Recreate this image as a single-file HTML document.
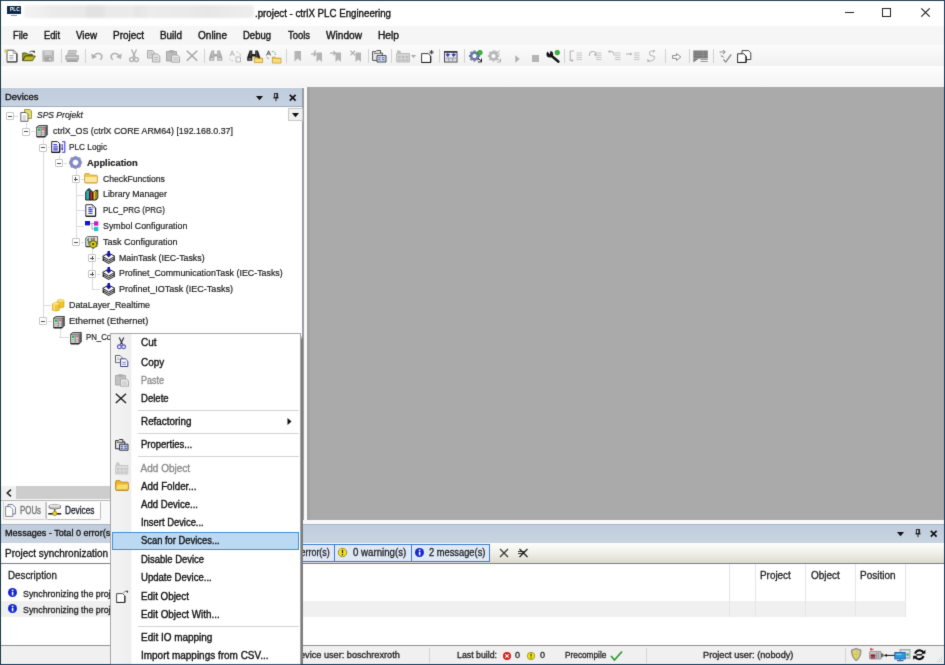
<!DOCTYPE html>
<html><head><meta charset="utf-8">
<style>
*{box-sizing:border-box;margin:0;padding:0}
html,body{width:945px;height:665px;overflow:hidden;background:#fff}
body{font-family:"Liberation Sans",sans-serif;font-size:9px;color:#1e1e1e;position:relative}
.a{position:absolute;white-space:nowrap}
.t{position:absolute;white-space:nowrap;transform-origin:0 50%}
svg{overflow:visible}
</style></head><body>
<svg width="0" height="0" style="position:absolute"><filter id="sb" x="0" y="0" width="100%" height="100%" color-interpolation-filters="sRGB"><feConvolveMatrix order="3" kernelMatrix="0.0113 0.0838 0.0113 0.0838 0.6193 0.0838 0.0113 0.0838 0.0113" edgeMode="duplicate" preserveAlpha="true"/></filter></svg>
<div id="wrap" style="position:absolute;left:-8px;top:-8px;width:961px;height:681px;background:#1e4060;filter:url(#sb)"><div style="position:absolute;left:8px;top:8px;width:945px;height:665px">
<div class="a" style="left:0px;top:0px;width:945px;height:665px;background:#fff;"></div>
<div class="a" style="left:1px;top:1px;width:943px;height:25px;background:#fff;"></div>
<div class="a" style="left:24px;top:4.5px;width:230px;height:13.5px;background:linear-gradient(90deg,#f3f3f3 0%,#efefef 8%,#ebebeb 12%,#e9e9e9 26%,#e2e2e2 28%,#e3e3e3 34%,#eaeaea 36%,#ebebeb 47%,#e6e6e6 49%,#e8e8e8 52%,#ececec 55%,#eaeaea 70%,#e7e7e7 80%,#ebebeb 90%,#eeeeee 100%);border-radius:3px;filter:blur(0.8px)"></div>
<div class="a" style="left:1px;top:26px;width:943px;height:19px;background:#f6f6f6;"></div>
<div class="a" style="left:1px;top:45px;width:943px;height:21px;background:linear-gradient(#fbfbfb,#f1f1f1);"></div>
<div class="a" style="left:1px;top:66px;width:943px;height:21px;background:linear-gradient(#fdfdfd,#f4f4f4);"></div>
<div class="a" style="left:307px;top:87px;width:637px;height:433px;background:#aaaaaa;"></div>
<div class="a" style="left:307px;top:87px;width:3px;height:433px;background:#a1a1a1;"></div>
<div class="a" style="left:1px;top:87px;width:306px;height:437px;background:#f9f9f9;"></div>
<div class="a" style="left:1px;top:520px;width:943px;height:4px;background:#f9f9f9;"></div>
<div class="a" style="left:1px;top:87.5px;width:302px;height:19px;background:linear-gradient(#bfccdc,#c7d3e1);"></div>
<div class="a" style="left:1px;top:106px;width:302px;height:380px;background:#fff;"></div>
<div class="a" style="left:1px;top:106px;width:302px;height:1px;background:#9eacc0;"></div>
<div class="a" style="left:302.2px;top:88px;width:1.5px;height:432px;background:#9a9da2;"></div>
<div class="a" style="left:1px;top:524px;width:943px;height:19px;background:linear-gradient(#bfccdc,#c9d4e1);"></div>
<div class="a" style="left:1px;top:524px;width:943px;height:1px;background:#aab6c6;"></div>
<div class="a" style="left:1px;top:543px;width:943px;height:21px;background:linear-gradient(#fdfdfb 0%,#f1f1ea 45%,#d9d9cc 100%);"></div>
<div class="a" style="left:1px;top:564px;width:943px;height:82px;background:#fff;"></div>
<div class="a" style="left:1px;top:646px;width:943px;height:18px;background:#f0f0f0;"></div>
<div class="t" style="left:255px;top:6.55px;font-size:10px;line-height:14px;height:14px;color:#111;transform:scaleX(0.9710);-webkit-text-stroke:0.35px;">.project - ctrlX PLC Engineering</div>
<div class="t" style="left:13.2px;top:28.55px;font-size:10px;line-height:14px;height:14px;color:#111;transform:scaleX(0.9309);-webkit-text-stroke:0.35px;">File</div>
<div class="t" style="left:44.2px;top:28.55px;font-size:10px;line-height:14px;height:14px;color:#111;transform:scaleX(0.9285);-webkit-text-stroke:0.35px;">Edit</div>
<div class="t" style="left:76.2px;top:28.55px;font-size:10px;line-height:14px;height:14px;color:#111;transform:scaleX(0.9770);-webkit-text-stroke:0.35px;">View</div>
<div class="t" style="left:113.2px;top:28.55px;font-size:10px;line-height:14px;height:14px;color:#111;transform:scaleX(0.9960);-webkit-text-stroke:0.35px;">Project</div>
<div class="t" style="left:160.2px;top:28.55px;font-size:10px;line-height:14px;height:14px;color:#111;transform:scaleX(0.9893);-webkit-text-stroke:0.35px;">Build</div>
<div class="t" style="left:198.2px;top:28.55px;font-size:10px;line-height:14px;height:14px;color:#111;transform:scaleX(1.0032);-webkit-text-stroke:0.35px;">Online</div>
<div class="t" style="left:243.2px;top:28.55px;font-size:10px;line-height:14px;height:14px;color:#111;transform:scaleX(0.9502);-webkit-text-stroke:0.35px;">Debug</div>
<div class="t" style="left:288.2px;top:28.55px;font-size:10px;line-height:14px;height:14px;color:#111;transform:scaleX(0.9424);-webkit-text-stroke:0.35px;">Tools</div>
<div class="t" style="left:326.2px;top:28.55px;font-size:10px;line-height:14px;height:14px;color:#111;transform:scaleX(1.0122);-webkit-text-stroke:0.35px;">Window</div>
<div class="t" style="left:378.2px;top:28.55px;font-size:10px;line-height:14px;height:14px;color:#111;transform:scaleX(1.0210);-webkit-text-stroke:0.35px;">Help</div>
<div class="a" style="left:26px;top:123px;width:1px;height:5px;background:#dadada;"></div>
<div class="a" style="left:43px;top:139px;width:1px;height:5px;background:#dadada;"></div>
<div class="a" style="left:43px;top:152px;width:1px;height:166px;background:#dadada;"></div>
<div class="a" style="left:59px;top:155px;width:1px;height:5px;background:#dadada;"></div>
<div class="a" style="left:76px;top:170px;width:1px;height:68px;background:#dadada;"></div>
<div class="a" style="left:92px;top:249px;width:1px;height:40px;background:#dadada;"></div>
<div class="a" style="left:60px;top:327px;width:1px;height:10px;background:#dadada;"></div>
<div class="a" style="left:31px;top:131px;width:4px;height:1px;background:#dadada;"></div>
<div class="a" style="left:48px;top:147px;width:2px;height:1px;background:#dadada;"></div>
<div class="a" style="left:64px;top:163px;width:3px;height:1px;background:#dadada;"></div>
<div class="a" style="left:81px;top:179px;width:3px;height:1px;background:#dadada;"></div>
<div class="a" style="left:76px;top:195px;width:8px;height:1px;background:#dadada;"></div>
<div class="a" style="left:76px;top:210px;width:9px;height:1px;background:#dadada;"></div>
<div class="a" style="left:76px;top:226px;width:8px;height:1px;background:#dadada;"></div>
<div class="a" style="left:81px;top:242px;width:3px;height:1px;background:#dadada;"></div>
<div class="a" style="left:97px;top:258px;width:3px;height:1px;background:#dadada;"></div>
<div class="a" style="left:97px;top:274px;width:3px;height:1px;background:#dadada;"></div>
<div class="a" style="left:92px;top:289px;width:8px;height:1px;background:#dadada;"></div>
<div class="a" style="left:43px;top:305px;width:8px;height:1px;background:#dadada;"></div>
<div class="a" style="left:48px;top:321px;width:4px;height:1px;background:#dadada;"></div>
<div class="a" style="left:59px;top:337px;width:10px;height:1px;background:#dadada;"></div>
<div class="a" style="left:14px;top:116px;width:4px;height:1px;background:#dadada;"></div>
<div class="t" style="left:37.1px;top:109.23px;font-size:9.2px;line-height:13.2px;height:13.2px;color:#222;font-style:italic;transform:scaleX(0.9254);-webkit-text-stroke:0.2px;">SPS Projekt</div>
<svg class="a" style="left:19.5px;top:109.0px" width="12" height="13" viewBox="0 0 12 13"><path d="M4.5 0.5 H10 L11.5 2 V9.5 H4.5 Z" fill="#e4dc62" stroke="#8c8a30" stroke-width="0.8"/><path d="M0.8 3.5 H6 L8 5.5 V12.3 H0.8 Z" fill="#fff" stroke="#555" stroke-width="0.9"/><path d="M2.5 7 H6 M2.5 9 H6 M2.5 11 H6" stroke="#999" stroke-width="0.7"/></svg>
<div class="a" style="left:5.5px;top:112.0px;width:8px;height:8px;background:#fff;border:1px solid #c6c6c6;border-radius:1px"></div>
<div class="a" style="left:7.5px;top:115.5px;width:4px;height:1px;background:#505050;"></div>
<div class="t" style="left:52.8px;top:125.23px;font-size:9.2px;line-height:13.2px;height:13.2px;color:#222;transform:scaleX(0.9629);-webkit-text-stroke:0.2px;">ctrlX_OS (ctrlX CORE ARM64) [192.168.0.37]</div>
<svg class="a" style="left:36px;top:125.0px" width="12" height="12.5" viewBox="0 0 12 12.5"><path d="M0.7 2 L3 0.5 H11.3 V10 L9 12 H0.7 Z" fill="#d9d9d9" stroke="#3a3a3a" stroke-width="0.9"/><path d="M9 12 V2.3 L11.3 0.5 M0.7 2.2 H9" stroke="#3a3a3a" stroke-width="0.7" fill="none"/><path d="M9.4 2.4 L11 1.2 V9.8 L9.4 11.4 Z" fill="#555"/><path d="M1 11.6 H9" stroke="#222" stroke-width="1.2"/><path d="M5.2 2.6 V11.5" stroke="#666" stroke-width="0.8"/><rect x="2" y="3.5" width="2.4" height="2.4" fill="#22b84a"/><rect x="6.3" y="3.3" width="2" height="2" fill="#e0507a"/><path d="M2 7.5 H4.4 M2 9.3 H4.4 M6.2 7.5 H8.4 M6.2 9.3 H8.4" stroke="#9a9a9a" stroke-width="0.7"/></svg>
<div class="a" style="left:22.0px;top:127.5px;width:8px;height:8px;background:#fff;border:1px solid #c6c6c6;border-radius:1px"></div>
<div class="a" style="left:24.0px;top:131.0px;width:4px;height:1px;background:#505050;"></div>
<div class="t" style="left:69.4px;top:141.23px;font-size:9.2px;line-height:13.2px;height:13.2px;color:#222;transform:scaleX(0.8976);-webkit-text-stroke:0.2px;">PLC Logic</div>
<svg class="a" style="left:51px;top:140.5px" width="15" height="12" viewBox="0 0 15 12"><path d="M0.7 0.6 H6.5 L8.6 2.7 V11.3 H0.7 Z" fill="#fff" stroke="#222" stroke-width="1"/><path d="M0.7 11.4 H8.6 M8.7 3 V11.4" stroke="#111" stroke-width="1.3"/><path d="M2.3 3.5 H6 M2.3 5.3 H6.8 M2.3 7.1 H6.8 M2.3 8.9 H6.8" stroke="#3a3ae0" stroke-width="1.1"/><path d="M11 0.8 H13.8 V11.2 H11 M11.2 3 V9" stroke="#3a3ae0" stroke-width="1.1" fill="none"/><path d="M10.2 7.5 L11.3 9.5 L12.4 7.5 Z" fill="#2a2ab0"/></svg>
<div class="a" style="left:38.5px;top:143.5px;width:8px;height:8px;background:#fff;border:1px solid #c6c6c6;border-radius:1px"></div>
<div class="a" style="left:40.5px;top:147.0px;width:4px;height:1px;background:#505050;"></div>
<div class="t" style="left:87.2px;top:157.23px;font-size:9.2px;line-height:13.2px;height:13.2px;color:#222;font-weight:bold;transform:scaleX(1.0142);-webkit-text-stroke:0.2px;">Application</div>
<svg class="a" style="left:68.5px;top:156.0px" width="13" height="13" viewBox="0 0 13 13"><g transform="translate(6.5 6.5)"><circle r="4.6" fill="none" stroke="#8087c4" stroke-width="3"/><g stroke="#8f95c9" stroke-width="2.2"><line x1="0" y1="-4.8" x2="0" y2="-6.6" transform="rotate(0)"/><line x1="0" y1="-4.8" x2="0" y2="-6.6" transform="rotate(45)"/><line x1="0" y1="-4.8" x2="0" y2="-6.6" transform="rotate(90)"/><line x1="0" y1="-4.8" x2="0" y2="-6.6" transform="rotate(135)"/><line x1="0" y1="-4.8" x2="0" y2="-6.6" transform="rotate(180)"/><line x1="0" y1="-4.8" x2="0" y2="-6.6" transform="rotate(225)"/><line x1="0" y1="-4.8" x2="0" y2="-6.6" transform="rotate(270)"/><line x1="0" y1="-4.8" x2="0" y2="-6.6" transform="rotate(315)"/></g><circle r="2.9" fill="#fff"/><circle r="3.2" fill="none" stroke="#6d74b4" stroke-width="0.6"/></g></svg>
<div class="a" style="left:55.0px;top:159.0px;width:8px;height:8px;background:#fff;border:1px solid #c6c6c6;border-radius:1px"></div>
<div class="a" style="left:57.0px;top:162.5px;width:4px;height:1px;background:#505050;"></div>
<div class="t" style="left:102.6px;top:173.23px;font-size:9.2px;line-height:13.2px;height:13.2px;color:#222;transform:scaleX(0.9399);-webkit-text-stroke:0.2px;">CheckFunctions</div>
<svg class="a" style="left:84.3px;top:173.0px" width="14" height="10.5" viewBox="0 0 14 10.5"><path d="M0.6 2 Q0.6 0.6 2 0.6 H5 L6.5 2.2 H12.4 Q13.4 2.2 13.4 3.4 V9 Q13.4 10 12.4 10 H1.6 Q0.6 10 0.6 9 Z" fill="#f3c64e" stroke="#c8962a" stroke-width="0.8"/><path d="M1.2 4 H12.8 V9 Q12.8 9.5 12.2 9.5 H1.8 Q1.2 9.5 1.2 9 Z" fill="#fbe7a3"/><path d="M1 9.7 H13" stroke="#d2a033" stroke-width="0.8"/></svg>
<div class="a" style="left:71.5px;top:175.0px;width:8px;height:8px;background:#fff;border:1px solid #c6c6c6;border-radius:1px"></div>
<div class="a" style="left:73.5px;top:178.5px;width:4px;height:1px;background:#505050;"></div>
<div class="a" style="left:75.0px;top:177.0px;width:1px;height:4px;background:#505050;"></div>
<div class="t" style="left:102.6px;top:188.23px;font-size:9.2px;line-height:13.2px;height:13.2px;color:#222;transform:scaleX(0.9554);-webkit-text-stroke:0.2px;">Library Manager</div>
<svg class="a" style="left:84.6px;top:187.5px" width="13.5" height="12.5" viewBox="0 0 13.5 12.5"><path d="M0.7 4 L3 1.2 L5 3.5 V12 H0.7 Z" fill="#1fb3b3" stroke="#111" stroke-width="0.9"/><path d="M3 1.2 L4.5 0.5 L6 2.5 L5 3.5 Z" fill="#0d8a8a" stroke="#111" stroke-width="0.7"/><path d="M4.8 4.5 L6.3 2.8 L8.2 4.5 V12 H4.8 Z" fill="#e01e1e" stroke="#111" stroke-width="0.9"/><path d="M8 4.5 L10 2.5 L12.8 2.2 V10 L11 12 H8 Z" fill="#d9d326" stroke="#111" stroke-width="0.9"/><path d="M11 4 V12 M11 4 L12.8 2.2" stroke="#111" stroke-width="0.7" fill="none"/></svg>
<div class="t" style="left:102.6px;top:204.23px;font-size:9.2px;line-height:13.2px;height:13.2px;color:#222;transform:scaleX(0.8663);-webkit-text-stroke:0.2px;">PLC_PRG (PRG)</div>
<svg class="a" style="left:85.3px;top:203.5px" width="11.5" height="13" viewBox="0 0 11.5 13"><path d="M0.8 0.7 H7.5 L10.5 3.6 V12.2 H0.8 Z" fill="#fff" stroke="#333" stroke-width="1"/><path d="M0.8 12.3 H10.6 M10.6 4 V12.3" stroke="#222" stroke-width="1.2"/><path d="M7.3 0.8 V3.8 H10.3" stroke="#555" stroke-width="0.7" fill="none"/><path d="M3.4 3.6 H6.2 M3.4 5.5 H7.6 M3.4 7.4 H7.6 M3.4 9.3 H7.6" stroke="#4848e6" stroke-width="1.3"/></svg>
<div class="t" style="left:102.6px;top:220.23px;font-size:9.2px;line-height:13.2px;height:13.2px;color:#222;transform:scaleX(0.9595);-webkit-text-stroke:0.2px;">Symbol Configuration</div>
<svg class="a" style="left:84.6px;top:220.5px" width="13.5" height="10.5" viewBox="0 0 13.5 10.5"><rect x="0" y="0" width="5" height="4.4" fill="#1414c8"/><rect x="9" y="0.3" width="4.3" height="4.4" fill="#d018d0"/><rect x="9" y="5.8" width="4.3" height="4.4" fill="#16c8c8"/><path d="M5 2.2 H7 V8 H9 M7 2.5 H9" stroke="#888" stroke-width="0.7" fill="none"/></svg>
<div class="t" style="left:102.6px;top:236.23px;font-size:9.2px;line-height:13.2px;height:13.2px;color:#222;transform:scaleX(0.9803);-webkit-text-stroke:0.2px;">Task Configuration</div>
<svg class="a" style="left:84.8px;top:235.5px" width="13.5" height="12.5" viewBox="0 0 13.5 12.5"><path d="M0.7 2.2 L2.6 0.6 H12.6 V8.5 L10.8 10.5 H0.7 Z" fill="#dcdcdc" stroke="#444" stroke-width="0.8"/><path d="M1.2 10.6 H6" stroke="#222" stroke-width="1.2"/><path d="M3.4 2.2 V8.5 M6.3 2 V6 M9.2 1.8 V5" stroke="#666" stroke-width="1"/><rect x="2" y="3" width="1.8" height="1.8" fill="#22b84a"/><rect x="7.6" y="1.8" width="1.6" height="1.6" fill="#e0507a"/><g transform="translate(8.2 8.2)"><circle r="3.5" fill="#dccf24" stroke="#5a5410" stroke-width="0.9"/><g stroke="#7a7014" stroke-width="1.7"><line x1="0" y1="-3.4" x2="0" y2="-4.8" transform="rotate(0)"/><line x1="0" y1="-3.4" x2="0" y2="-4.8" transform="rotate(60)"/><line x1="0" y1="-3.4" x2="0" y2="-4.8" transform="rotate(120)"/><line x1="0" y1="-3.4" x2="0" y2="-4.8" transform="rotate(180)"/><line x1="0" y1="-3.4" x2="0" y2="-4.8" transform="rotate(240)"/><line x1="0" y1="-3.4" x2="0" y2="-4.8" transform="rotate(300)"/></g><circle r="1.1" fill="#3a360a"/></g></svg>
<div class="a" style="left:71.5px;top:238.0px;width:8px;height:8px;background:#fff;border:1px solid #c6c6c6;border-radius:1px"></div>
<div class="a" style="left:73.5px;top:241.5px;width:4px;height:1px;background:#505050;"></div>
<div class="t" style="left:119px;top:252.23px;font-size:9.2px;line-height:13.2px;height:13.2px;color:#222;transform:scaleX(0.9580);-webkit-text-stroke:0.2px;">MainTask (IEC-Tasks)</div>
<svg class="a" style="left:101.6px;top:251.0px" width="13.5" height="13" viewBox="0 0 13.5 13"><path d="M0.6 9 L6.7 5.6 L13 9 L6.7 12.5 Z" fill="#dcdcdc" stroke="#222" stroke-width="1"/><path d="M0.6 7.2 L6.7 3.8 L13 7.2 L6.7 10.7 Z" fill="#ececec" stroke="#222" stroke-width="1"/><path d="M0.6 5.4 L6.7 2 L13 5.4 L6.7 8.9 Z" fill="#fff" stroke="#222" stroke-width="1"/><path d="M5.5 0 H8 V3.3 H9.9 L6.75 6.6 L3.6 3.3 H5.5 Z" fill="#1616b0"/></svg>
<div class="a" style="left:88.0px;top:254.0px;width:8px;height:8px;background:#fff;border:1px solid #c6c6c6;border-radius:1px"></div>
<div class="a" style="left:90.0px;top:257.5px;width:4px;height:1px;background:#505050;"></div>
<div class="a" style="left:91.5px;top:256.0px;width:1px;height:4px;background:#505050;"></div>
<div class="t" style="left:119px;top:267.23px;font-size:9.2px;line-height:13.2px;height:13.2px;color:#222;transform:scaleX(0.9627);-webkit-text-stroke:0.2px;">Profinet_CommunicationTask (IEC-Tasks)</div>
<svg class="a" style="left:101.6px;top:266.5px" width="13.5" height="13" viewBox="0 0 13.5 13"><path d="M0.6 9 L6.7 5.6 L13 9 L6.7 12.5 Z" fill="#dcdcdc" stroke="#222" stroke-width="1"/><path d="M0.6 7.2 L6.7 3.8 L13 7.2 L6.7 10.7 Z" fill="#ececec" stroke="#222" stroke-width="1"/><path d="M0.6 5.4 L6.7 2 L13 5.4 L6.7 8.9 Z" fill="#fff" stroke="#222" stroke-width="1"/><path d="M5.5 0 H8 V3.3 H9.9 L6.75 6.6 L3.6 3.3 H5.5 Z" fill="#1616b0"/></svg>
<div class="a" style="left:88.0px;top:270.0px;width:8px;height:8px;background:#fff;border:1px solid #c6c6c6;border-radius:1px"></div>
<div class="a" style="left:90.0px;top:273.5px;width:4px;height:1px;background:#505050;"></div>
<div class="a" style="left:91.5px;top:272.0px;width:1px;height:4px;background:#505050;"></div>
<div class="t" style="left:119px;top:283.23px;font-size:9.2px;line-height:13.2px;height:13.2px;color:#222;transform:scaleX(0.9832);-webkit-text-stroke:0.2px;">Profinet_IOTask (IEC-Tasks)</div>
<svg class="a" style="left:101.6px;top:282.5px" width="13.5" height="13" viewBox="0 0 13.5 13"><path d="M0.6 9 L6.7 5.6 L13 9 L6.7 12.5 Z" fill="#dcdcdc" stroke="#222" stroke-width="1"/><path d="M0.6 7.2 L6.7 3.8 L13 7.2 L6.7 10.7 Z" fill="#ececec" stroke="#222" stroke-width="1"/><path d="M0.6 5.4 L6.7 2 L13 5.4 L6.7 8.9 Z" fill="#fff" stroke="#222" stroke-width="1"/><path d="M5.5 0 H8 V3.3 H9.9 L6.75 6.6 L3.6 3.3 H5.5 Z" fill="#1616b0"/></svg>
<div class="t" style="left:68.9px;top:299.23px;font-size:9.2px;line-height:13.2px;height:13.2px;color:#222;transform:scaleX(0.9670);-webkit-text-stroke:0.2px;">DataLayer_Realtime</div>
<svg class="a" style="left:51.5px;top:298.5px" width="12.5" height="12.5" viewBox="0 0 12.5 12.5"><path d="M5.3 1.3 Q8.6 -0.6 12 1.3 V8 Q8.6 9.8 5.3 8 Z" fill="#f0c428" stroke="#c79a12" stroke-width="0.6"/><ellipse cx="8.65" cy="1.5" rx="3.3" ry="1.2" fill="#f8e27e"/><path d="M0.4 4.4 Q3.7 2.5 7.2 4.4 V11.2 Q3.7 13 0.4 11.2 Z" fill="#f2c62c" stroke="#c79a12" stroke-width="0.6"/><ellipse cx="3.8" cy="4.6" rx="3.3" ry="1.2" fill="#fae88e"/><path d="M2.2 6 V11.5" stroke="#f9e9a0" stroke-width="1.2"/></svg>
<div class="t" style="left:68.9px;top:315.23px;font-size:9.2px;line-height:13.2px;height:13.2px;color:#222;transform:scaleX(1.0148);-webkit-text-stroke:0.2px;">Ethernet (Ethernet)</div>
<svg class="a" style="left:53px;top:315.5px" width="12" height="12.5" viewBox="0 0 12 12.5"><path d="M0.7 2 L3 0.5 H11.3 V10 L9 12 H0.7 Z" fill="#d9d9d9" stroke="#3a3a3a" stroke-width="0.9"/><path d="M9 12 V2.3 L11.3 0.5 M0.7 2.2 H9" stroke="#3a3a3a" stroke-width="0.7" fill="none"/><path d="M9.4 2.4 L11 1.2 V9.8 L9.4 11.4 Z" fill="#555"/><path d="M1 11.6 H9" stroke="#222" stroke-width="1.2"/><path d="M5.2 2.6 V11.5" stroke="#666" stroke-width="0.8"/><rect x="2" y="3.5" width="2.4" height="2.4" fill="#22b84a"/><rect x="6.3" y="3.3" width="2" height="2" fill="#e0507a"/><path d="M2 7.5 H4.4 M2 9.3 H4.4 M6.2 7.5 H8.4 M6.2 9.3 H8.4" stroke="#9a9a9a" stroke-width="0.7"/></svg>
<div class="a" style="left:38.5px;top:317.0px;width:8px;height:8px;background:#fff;border:1px solid #c6c6c6;border-radius:1px"></div>
<div class="a" style="left:40.5px;top:320.5px;width:4px;height:1px;background:#505050;"></div>
<div class="t" style="left:85.8px;top:331.23px;font-size:9.2px;line-height:13.2px;height:13.2px;color:#222;transform:scaleX(0.8515);-webkit-text-stroke:0.2px;clip-path:inset(0 29px 0 0);">PN_Controller</div>
<svg class="a" style="left:69.6px;top:331.5px" width="12" height="12.5" viewBox="0 0 12 12.5"><path d="M0.7 2 L3 0.5 H11.3 V10 L9 12 H0.7 Z" fill="#d9d9d9" stroke="#3a3a3a" stroke-width="0.9"/><path d="M9 12 V2.3 L11.3 0.5 M0.7 2.2 H9" stroke="#3a3a3a" stroke-width="0.7" fill="none"/><path d="M9.4 2.4 L11 1.2 V9.8 L9.4 11.4 Z" fill="#555"/><path d="M1 11.6 H9" stroke="#222" stroke-width="1.2"/><path d="M5.2 2.6 V11.5" stroke="#666" stroke-width="0.8"/><rect x="2" y="3.5" width="2.4" height="2.4" fill="#22b84a"/><rect x="6.3" y="3.3" width="2" height="2" fill="#e0507a"/><path d="M2 7.5 H4.4 M2 9.3 H4.4 M6.2 7.5 H8.4 M6.2 9.3 H8.4" stroke="#9a9a9a" stroke-width="0.7"/></svg>
<div class="a" style="left:61px;top:49px;width:1px;height:14px;background:#d2d2d2;"></div>
<div class="a" style="left:85px;top:49px;width:1px;height:14px;background:#d2d2d2;"></div>
<div class="a" style="left:204px;top:49px;width:1px;height:14px;background:#d2d2d2;"></div>
<div class="a" style="left:286px;top:49px;width:1px;height:14px;background:#d2d2d2;"></div>
<div class="a" style="left:368px;top:49px;width:1px;height:14px;background:#d2d2d2;"></div>
<div class="a" style="left:391px;top:49px;width:1px;height:14px;background:#d2d2d2;"></div>
<div class="a" style="left:439px;top:49px;width:1px;height:14px;background:#d2d2d2;"></div>
<div class="a" style="left:464px;top:49px;width:1px;height:14px;background:#d2d2d2;"></div>
<div class="a" style="left:564px;top:49px;width:1px;height:14px;background:#d2d2d2;"></div>
<div class="a" style="left:665px;top:49px;width:1px;height:14px;background:#d2d2d2;"></div>
<div class="a" style="left:689px;top:49px;width:1px;height:14px;background:#d2d2d2;"></div>
<div class="a" style="left:713px;top:49px;width:1px;height:14px;background:#d2d2d2;"></div>
<svg class="a" style="left:3.5px;top:49px" width="14" height="13.5" viewBox="0 0 14 13.5"><path d="M3 1.2 H9.5 L12.8 4.3 V12.8 H3 Z" fill="#fff" stroke="#5a5a5a" stroke-width="1"/><path d="M3 13 H12.9 M12.9 4.6 V13" stroke="#3c3c3c" stroke-width="1.1"/><path d="M9.3 1.4 V4.5 H12.6" fill="none" stroke="#777" stroke-width="0.7"/><path d="M5.3 6.5 H9.6 M5.3 8.3 H9.6 M5.3 10 H9.6" stroke="#9a9a9a" stroke-width="0.8"/><path d="M1.8 0 V4 M0 2 H3.8 M0.5 0.6 L3.2 3.4 M3.2 0.6 L0.5 3.4" stroke="#d8c83a" stroke-width="0.8"/></svg>
<svg class="a" style="left:22px;top:50px" width="14" height="11.5" viewBox="0 0 14 11.5"><path d="M0.7 3 H4.5 L5.8 4.3 H10.3 V6 H3.2 L0.7 10.6 Z" fill="#a4a41e" stroke="#3c3c0c" stroke-width="0.8"/><path d="M3.4 6 H13.3 L10.5 10.7 H0.8 Z" fill="#b9b92a" stroke="#3c3c0c" stroke-width="0.8"/><path d="M7.5 2.2 Q9.5 0.2 11.5 1.8" fill="none" stroke="#444" stroke-width="0.9"/><path d="M10.3 0.8 H12.8 V3.3 Z" fill="#222"/></svg>
<svg class="a" style="left:42px;top:49.5px" width="12.5" height="12" viewBox="0 0 12.5 12"><rect x="0.4" y="0.4" width="11.6" height="11.2" fill="#b8b8b8"/><rect x="2.4" y="0.4" width="7.4" height="4.6" fill="#cfcfcf"/><rect x="2.8" y="7" width="6.6" height="4.6" fill="#a6a6a6"/><rect x="7.3" y="8" width="1.4" height="2.6" fill="#dcdcdc"/></svg>
<svg class="a" style="left:65px;top:49.5px" width="14.5" height="12.5" viewBox="0 0 14.5 12.5"><path d="M3.5 0.5 H11.5 L10.5 5 H2.5 Z" fill="#d6d6d6" stroke="#a8a8a8" stroke-width="0.8"/><path d="M1 5 H13 Q14 5 14 6 V10 H0.3 V6 Q0.3 5 1 5 Z" fill="#b4b4b4"/><path d="M1.5 10 H12.8 V12 H1.5 Z" fill="#a2a2a2"/><path d="M4 2 H10.4 M3.7 3.5 H10" stroke="#a8a8a8" stroke-width="0.7"/><path d="M2 7.5 H12.3" stroke="#d8d8d8" stroke-width="1"/></svg>
<svg class="a" style="left:91px;top:52px" width="12" height="8.5" viewBox="0 0 12 8.5"><path d="M2.2 4.5 Q6.5 -0.5 10.3 2.8 Q12 5.2 9.3 7.8" fill="none" stroke="#b0b0b0" stroke-width="1.5"/><path d="M0.2 1.6 L1 7 L6 5 Z" fill="#b0b0b0"/></svg>
<svg class="a" style="left:110px;top:52px" width="12" height="8.5" viewBox="0 0 12 8.5"><g transform="translate(12 0) scale(-1 1)"><path d="M2.2 4.5 Q6.5 -0.5 10.3 2.8 Q12 5.2 9.3 7.8" fill="none" stroke="#b0b0b0" stroke-width="1.5"/><path d="M0.2 1.6 L1 7 L6 5 Z" fill="#b0b0b0"/></g></svg>
<svg class="a" style="left:128.5px;top:49px" width="10" height="13.5" viewBox="0 0 10 13.5"><path d="M2.5 0.5 L6.3 8.6 M7.5 0.5 L3.7 8.6" stroke="#adadad" stroke-width="1.3"/><circle cx="2.6" cy="10.6" r="2" fill="none" stroke="#adadad" stroke-width="1.3"/><circle cx="7.4" cy="10.6" r="2" fill="none" stroke="#adadad" stroke-width="1.3"/></svg>
<svg class="a" style="left:147px;top:49.5px" width="13.5" height="12.5" viewBox="0 0 13.5 12.5"><path d="M0.5 0.5 H5.5 L7.5 2.5 V8 H0.5 Z" fill="#d8d8d8" stroke="#a4a4a4" stroke-width="0.9"/><path d="M5.5 4 H10.5 L12.8 6.2 V12 H5.5 Z" fill="#e0e0e0" stroke="#a4a4a4" stroke-width="0.9"/><path d="M7 7.5 H11 M7 9.5 H11" stroke="#b4b4b4" stroke-width="0.8"/><path d="M2 3 H5 M2 5 H5" stroke="#b4b4b4" stroke-width="0.8"/></svg>
<svg class="a" style="left:166px;top:49.5px" width="14" height="12.5" viewBox="0 0 14 12.5"><path d="M0.5 1.5 H10.5 V11 H0.5 Z" fill="#bdbdbd" stroke="#a2a2a2" stroke-width="0.9"/><rect x="3.2" y="0.2" width="4.6" height="2.6" fill="#a8a8a8"/><path d="M5.5 5 H11.5 L13.5 7 V12.2 H5.5 Z" fill="#e6e6e6" stroke="#a2a2a2" stroke-width="0.9"/><path d="M7 8 H12 M7 10 H12" stroke="#b4b4b4" stroke-width="0.8"/></svg>
<svg class="a" style="left:186px;top:50px" width="12" height="11.5" viewBox="0 0 12 11.5"><path d="M0.8 0.8 L11.2 10.8 M11.2 0.8 L0.8 10.8" stroke="#a6a6a6" stroke-width="1.5"/></svg>
<svg class="a" style="left:209px;top:50px" width="13.5" height="11.5" viewBox="0 0 13.5 11.5"><path d="M2.6 0.4 H5.3 V4 H8.2 V0.4 H10.9 L13.3 7.5 V10.8 H8.2 V6.5 H5.3 V10.8 H0.2 V7.5 Z" fill="#a9a9a9"/><path d="M1.6 8 H4.2 V10 H1.6 Z M9.4 8 H12 V10 H9.4 Z" fill="#d0d0d0"/><path d="M3.7 1.5 V6.5 M9.8 1.5 V6.5" stroke="#d0d0d0" stroke-width="0.8"/></svg>
<svg class="a" style="left:228px;top:49.5px" width="13.5" height="12.5" viewBox="0 0 13.5 12.5"><path d="M2 6 L4.2 0.8 L6.4 6 M2.9 4.2 H5.5" fill="none" stroke="#b8b8b8" stroke-width="1"/><path d="M8.5 2 Q12.5 2 12.3 6" fill="none" stroke="#bcbcbc" stroke-width="1" stroke-dasharray="1.4 1"/><path d="M5 10.8 Q1.5 10.8 1.7 7.5" fill="none" stroke="#bcbcbc" stroke-width="1" stroke-dasharray="1.4 1"/><path d="M8 7 H12.5 V12 H8 Z" fill="none" stroke="#b8b8b8" stroke-width="1"/></svg>
<svg class="a" style="left:247px;top:49.5px" width="13.5" height="11.5" viewBox="0 0 13.5 11.5"><path d="M2.6 0.4 H5.3 V4 H8.2 V0.4 H10.9 L13.3 7.5 V10.8 H8.2 V6.5 H5.3 V10.8 H0.2 V7.5 Z" fill="#202020"/><path d="M1.6 8 H4.2 V10 H1.6 Z M9.4 8 H12 V10 H9.4 Z" fill="#6a6a6a"/><path d="M3.7 1.5 V6.5 M9.8 1.5 V6.5" stroke="#6a6a6a" stroke-width="0.8"/></svg>
<svg class="a" style="left:253.5px;top:56px" width="9" height="7" viewBox="0 0 9 7"><path d="M0.4 1.2 H3.2 L4 2.2 H8.6 V6.6 H0.4 Z" fill="#f0c040" stroke="#b88a18" stroke-width="0.7"/><path d="M0.8 3 H8.2 V6.2 H0.8 Z" fill="#f8dc78"/></svg>
<svg class="a" style="left:266px;top:49.5px" width="10" height="9" viewBox="0 0 10 9"><path d="M0.6 5.5 L2.6 0.8 L4.6 5.5 M1.4 3.9 H3.8" fill="none" stroke="#444" stroke-width="0.9"/><path d="M5.8 1.5 Q9.5 1 9.3 5" fill="none" stroke="#4a9a4a" stroke-width="0.9" stroke-dasharray="1.4 0.9"/><path d="M3 8.5 Q0.7 8.5 0.9 6.8" fill="none" stroke="#4a9a4a" stroke-width="0.9" stroke-dasharray="1.4 0.9"/></svg>
<svg class="a" style="left:271.5px;top:55.5px" width="9.5" height="7.5" viewBox="0 0 9.5 7.5"><path d="M0.4 1.2 H3.2 L4 2.2 H9 V7 H0.4 Z" fill="#f0c040" stroke="#b88a18" stroke-width="0.7"/><path d="M0.8 3 H8.6 V6.6 H0.8 Z" fill="#f8dc78"/></svg>
<svg class="a" style="left:290.5px;top:49.5px" width="12" height="12.5" viewBox="0 0 12 12.5"><path d="M3.5 1 H10 V11.5 L6.75 8.6 L3.5 11.5 Z" fill="#b4b4b4"/></svg>
<svg class="a" style="left:311px;top:49.5px" width="12" height="12.5" viewBox="0 0 12 12.5"><path d="M5.5 2.5 H11 V12 L8.25 9.5 L5.5 12 Z" fill="#b4b4b4"/><path d="M0 4.2 H4.5 M2.6 2 L4.8 4.2 L2.6 6.4" fill="none" stroke="#b0b0b0" stroke-width="1.2"/><path d="M3 1 L5 0 L5 3Z" fill="#b8b8b8"/></svg>
<svg class="a" style="left:330px;top:49.5px" width="12" height="12.5" viewBox="0 0 12 12.5"><path d="M5.5 2.5 H11 V12 L8.25 9.5 L5.5 12 Z" fill="#b4b4b4"/><path d="M0 3.2 H5.5 M3.4 1 L5.6 3.2 L3.4 5.4" fill="none" stroke="#b0b0b0" stroke-width="1.2"/></svg>
<svg class="a" style="left:350px;top:49.5px" width="12" height="12.5" viewBox="0 0 12 12.5"><path d="M5.5 2.5 H11 V12 L8.25 9.5 L5.5 12 Z" fill="#b4b4b4"/><path d="M0.5 0.8 L5 5.2 M5 0.8 L0.5 5.2" fill="none" stroke="#b0b0b0" stroke-width="1.2"/></svg>
<svg class="a" style="left:372px;top:49.5px" width="14.5" height="12.5" viewBox="0 0 14.5 12.5"><path d="M0.6 1.6 H3.8 L4.8 0.5 H8.5 V3 H10.4 V10.4 H0.6 Z" fill="#e8e8e8" stroke="#3c3c3c" stroke-width="0.9"/><path d="M2 3.4 H8.8" stroke="#555" stroke-width="0.8"/><path d="M5 5.6 H14 V12 H5 Z" fill="#dfe6f4" stroke="#333" stroke-width="0.9"/><path d="M6.3 7.8 H8.6 M9.8 7.8 H12.6 M6.3 9.8 H8.6 M9.8 9.8 H12.6" stroke="#4a5aa8" stroke-width="1"/></svg>
<svg class="a" style="left:396px;top:49.5px" width="14.5" height="12.5" viewBox="0 0 14.5 12.5"><path d="M0.6 3.5 H13.5 V12 H0.6 Z" fill="#d4d4d4" stroke="#b4b4b4" stroke-width="0.8"/><path d="M2.2 6 H4.6 V8 H2.2 Z M6 6 H8.4 V8 H6 Z M9.8 6 H12.2 V8 H9.8 Z M2.2 9.3 H4.6 V11 H2.2 Z M6 9.3 H8.4 V11 H6 Z M9.8 9.3 H12.2 V11 H9.8 Z" fill="#bcbcbc"/><path d="M1 0.5 H4 L5.5 3.4 H1 Z" fill="#bdbdbd"/></svg>
<svg class="a" style="left:410.8px;top:55px" width="5" height="3" viewBox="0 0 5 3"><path d="M0 0 H5 L2.5 3 Z" fill="#a8a8a8"/></svg>
<svg class="a" style="left:421px;top:49.5px" width="13" height="13" viewBox="0 0 13 13"><path d="M0.6 3.6 H7.3 L9.6 6 V12.4 H0.6 Z" fill="#fff" stroke="#3a3a3a" stroke-width="1"/><path d="M0.6 12.5 H9.7 M9.7 6.2 V12.5" stroke="#1e1e1e" stroke-width="1.2"/><path d="M10.5 0 V4.4 M8.3 2.2 H12.7 M9 0.7 L12 3.7 M12 0.7 L9 3.7" stroke="#333" stroke-width="0.8"/></svg>
<svg class="a" style="left:444px;top:50.5px" width="13.5" height="11.5" viewBox="0 0 13.5 11.5"><rect x="0.5" y="0.5" width="12.5" height="10.5" fill="#f2f2f8" stroke="#4a4a4a" stroke-width="1"/><path d="M0.5 1 H13" stroke="#333" stroke-width="1.6"/><path d="M3.8 1.5 V4 M2 3.4 L3.8 5.6 L5.6 3.4 Z M9.7 1.5 V4 M7.9 3.4 L9.7 5.6 L11.5 3.4 Z" fill="#2a3ac8" stroke="#2a3ac8" stroke-width="0.9"/><path d="M1.5 7 H12 M4.8 7 V10.5 M8.7 7 V10.5" stroke="#7a7a8a" stroke-width="0.8"/><path d="M1.5 8.8 H12" stroke="#b0b0b8" stroke-width="0.7"/></svg>
<svg class="a" style="left:469px;top:49.5px" width="14" height="13" viewBox="0 0 14 13"><g transform="translate(5.5 6)"><circle r="3.4" fill="none" stroke="#6e7aa4" stroke-width="2.6"/><g stroke="#6e7aa4" stroke-width="2"><line x1="0" y1="-4.2" x2="0" y2="-5.6" transform="rotate(0)"/><line x1="0" y1="-4.2" x2="0" y2="-5.6" transform="rotate(45)"/><line x1="0" y1="-4.2" x2="0" y2="-5.6" transform="rotate(90)"/><line x1="0" y1="-4.2" x2="0" y2="-5.6" transform="rotate(135)"/><line x1="0" y1="-4.2" x2="0" y2="-5.6" transform="rotate(180)"/><line x1="0" y1="-4.2" x2="0" y2="-5.6" transform="rotate(225)"/><line x1="0" y1="-4.2" x2="0" y2="-5.6" transform="rotate(270)"/><line x1="0" y1="-4.2" x2="0" y2="-5.6" transform="rotate(315)"/></g><circle r="1.7" fill="#fff"/></g><path d="M9 8 L12.5 11.5 M9 12 L12.5 12 L12.5 8.5" fill="none" stroke="#222" stroke-width="1"/><circle cx="11" cy="2.6" r="2.3" fill="#2fc02f" stroke="#1a6a1a" stroke-width="0.5"/></svg>
<svg class="a" style="left:488px;top:49.5px" width="14" height="13" viewBox="0 0 14 13"><g transform="translate(5.5 6)"><circle r="3.4" fill="none" stroke="#b8b8b8" stroke-width="2.6"/><g stroke="#b8b8b8" stroke-width="2"><line x1="0" y1="-4.2" x2="0" y2="-5.6" transform="rotate(0)"/><line x1="0" y1="-4.2" x2="0" y2="-5.6" transform="rotate(45)"/><line x1="0" y1="-4.2" x2="0" y2="-5.6" transform="rotate(90)"/><line x1="0" y1="-4.2" x2="0" y2="-5.6" transform="rotate(135)"/><line x1="0" y1="-4.2" x2="0" y2="-5.6" transform="rotate(180)"/><line x1="0" y1="-4.2" x2="0" y2="-5.6" transform="rotate(225)"/><line x1="0" y1="-4.2" x2="0" y2="-5.6" transform="rotate(270)"/><line x1="0" y1="-4.2" x2="0" y2="-5.6" transform="rotate(315)"/></g><circle r="1.7" fill="#fff"/></g><path d="M9 8 L12.5 11.5 M9 12 L12.5 12 L12.5 8.5" fill="none" stroke="#b0b0b0" stroke-width="1"/></svg>
<svg class="a" style="left:493.5px;top:50px" width="7" height="5" viewBox="0 0 7 5"><path d="M0.5 0.5 L6 4.5 M6 0.5 L0.5 4.5" stroke="#b4b4b4" stroke-width="0.9"/></svg>
<svg class="a" style="left:515px;top:54.5px" width="5" height="8" viewBox="0 0 5 8"><path d="M0.3 0.3 L4.7 4 L0.3 7.7 Z" fill="#b0b0b0"/></svg>
<div class="a" style="left:532px;top:55px;width:7px;height:7px;background:#b4b4b4;"></div>
<svg class="a" style="left:546px;top:49.5px" width="15" height="13" viewBox="0 0 15 13"><path d="M4.5 5 L12.3 11.6" stroke="#141414" stroke-width="2.6" stroke-linecap="round"/><circle cx="3.8" cy="4.2" r="3.3" fill="#141414"/><path d="M-0.5 -0.5 L4 4.3 L4.6 -0.8 Z" fill="#f6f6f6"/><circle cx="11.3" cy="2.6" r="2.3" fill="#2fc02f" stroke="#1a6a1a" stroke-width="0.5"/></svg>
<svg class="a" style="left:569px;top:50px" width="14" height="12" viewBox="0 0 14 12"><path d="M5 1 H1.2 V10.5 H3" fill="none" stroke="#b4b4b4" stroke-width="1.1"/><path d="M2.5 8.8 L4.6 10.5 L2.5 12.2 Z" fill="#b4b4b4"/><path d="M7.5 3 H13.0 M7.5 5.2 H13.0 M7.5 7.4 H13.0 M7.5 9.6 H13.0" stroke="#c0c0c0" stroke-width="0.9"/></svg>
<svg class="a" style="left:588px;top:50px" width="14" height="12" viewBox="0 0 14 12"><path d="M1.5 6 Q1 1.5 5 1.5 Q8 1.5 7.5 4.5" fill="none" stroke="#b4b4b4" stroke-width="1.1"/><path d="M5.8 4 L7.5 6.4 L9 3.8 Z" fill="#b4b4b4"/><path d="M8 3 H13.5 M8 5.2 H13.5 M8 7.4 H13.5 M8 9.6 H13.5" stroke="#c0c0c0" stroke-width="0.9"/></svg>
<svg class="a" style="left:607px;top:50px" width="14" height="12" viewBox="0 0 14 12"><path d="M7 5.5 Q7.5 1.5 3.5 1.5 H2" fill="none" stroke="#b4b4b4" stroke-width="1.1"/><path d="M3.2 -0.2 L0.8 1.5 L3.2 3.2 Z" fill="#b4b4b4"/><path d="M8 3 H13.5 M8 5.2 H13.5 M8 7.4 H13.5 M8 9.6 H13.5" stroke="#c0c0c0" stroke-width="0.9"/></svg>
<svg class="a" style="left:626px;top:50px" width="14" height="12" viewBox="0 0 14 12"><path d="M0 4 H5" fill="none" stroke="#b4b4b4" stroke-width="1.1"/><path d="M4 2.2 L6.4 4 L4 5.8 Z" fill="#b4b4b4"/><path d="M8 3 H13.5 M8 5.2 H13.5 M8 7.4 H13.5 M8 9.6 H13.5" stroke="#c0c0c0" stroke-width="0.9"/></svg>
<svg class="a" style="left:646px;top:49.5px" width="11" height="13" viewBox="0 0 11 13"><path d="M8 1 Q3 0.5 3.5 3.5 Q4 6 7 6 Q9.5 6.5 8 9 Q6 12 2 11" fill="none" stroke="#b8b8b8" stroke-width="1.1"/><path d="M6.5 0 L9.5 0.6 L7.5 3 Z" fill="#b8b8b8"/><path d="M1 9 L4 10.2 L1.6 12.4 Z" fill="#b8b8b8"/></svg>
<svg class="a" style="left:672px;top:52.5px" width="9.5" height="8" viewBox="0 0 9.5 8"><path d="M0.6 2.6 H4.6 V0.6 L8.8 4 L4.6 7.4 V5.4 H0.6 Z" fill="#fff" stroke="#7a7a7a" stroke-width="0.9"/></svg>
<svg class="a" style="left:693px;top:49.5px" width="15.5" height="13" viewBox="0 0 15.5 13"><rect x="0.3" y="0.5" width="14.5" height="8" fill="#7c7c7c"/><path d="M0.3 3 H14.8 M0.3 5.5 H14.8" stroke="#9c9c9c" stroke-width="0.7" stroke-dasharray="1.5 1"/><path d="M0.3 8.5 L6 8.5 L0.3 12.5 Z" fill="#7c7c7c"/><path d="M7.5 9.5 H14.8 M7.5 11.5 H14.8" stroke="#9a9a9a" stroke-width="1"/><path d="M10 0.5 V8.5" stroke="#a0a0a0" stroke-width="0.6"/></svg>
<svg class="a" style="left:719px;top:49.5px" width="13" height="13" viewBox="0 0 13 13"><path d="M0.5 2 H6 M4 0 L6.3 2 L4 4" fill="none" stroke="#8a8a8a" stroke-width="1"/><path d="M2 4.5 L5 8 M2 6.5 H4" fill="none" stroke="#9a9a9a" stroke-width="0.9"/><path d="M4.5 9.5 L6.8 12 L12.2 4.5" fill="none" stroke="#8c8c8c" stroke-width="1.3"/></svg>
<svg class="a" style="left:737px;top:49.5px" width="14.5" height="13" viewBox="0 0 14.5 13"><path d="M5 0.6 H11.5 L13.8 2.8 V9.5 H5 Z" fill="#fff" stroke="#444" stroke-width="1"/><path d="M0.6 3.8 H6.8 L9 6 V12.4 H0.6 Z" fill="#fff" stroke="#333" stroke-width="1"/><path d="M0.6 12.5 H9.1 M9.1 6.2 V12.5" stroke="#1e1e1e" stroke-width="1.2"/></svg>
<div class="t" style="left:5.3px;top:91.23px;font-size:9.2px;line-height:13.2px;height:13.2px;color:#111;transform:scaleX(1.0238);-webkit-text-stroke:0.3px;">Devices</div>
<svg class="a" style="left:255.8px;top:95.7px" width="7" height="4.4" viewBox="0 0 7 4.4"><path d="M0 0 H7 L3.5 4.2 Z" fill="#111"/></svg>
<svg class="a" style="left:273px;top:93.0px" width="6" height="9" viewBox="0 0 6 9"><path d="M1.4 0.5 H4.6 V4.6 H1.4 Z" fill="none" stroke="#111" stroke-width="0.9"/><path d="M4 0.5 V4.6" stroke="#111" stroke-width="1.1"/><path d="M0.3 4.9 H5.7 M3 4.9 V8.2" stroke="#111" stroke-width="0.9"/></svg>
<svg class="a" style="left:289.3px;top:93.8px" width="7.4" height="7.4" viewBox="0 0 7.4 7.4"><path d="M0.8 0.8 L6.6 6.6 M6.6 0.8 L0.8 6.6" stroke="#111" stroke-width="1.7"/></svg>
<div class="a" style="left:288px;top:108px;width:15px;height:13px;background:#f0f0f0;border:1px solid #c8c8c8"></div>
<svg class="a" style="left:292px;top:112.7px" width="7" height="4.4" viewBox="0 0 7 4.4"><path d="M0 0 H7 L3.5 4.2 Z" fill="#111"/></svg>
<div class="a" style="left:1px;top:486px;width:302px;height:13px;background:#f0f0f0;"></div>
<div class="a" style="left:16px;top:486px;width:287px;height:13px;background:#cdcdcd;"></div>
<svg class="a" style="left:5.5px;top:488.5px" width="6" height="8" viewBox="0 0 6 8"><path d="M5 0.6 L1.2 4 L5 7.4" fill="none" stroke="#222" stroke-width="1.5"/></svg>
<div class="a" style="left:1px;top:499.5px;width:302px;height:1px;background:#b4b4b4;"></div>
<div class="a" style="left:2.5px;top:502px;width:43.5px;height:17.5px;background:#f6f6f6;border:1px solid #d0d0d0;border-top:none;border-radius:0 0 2px 2px"></div>
<div class="a" style="left:46px;top:501.5px;width:54.5px;height:18px;background:#fff;border:1px solid #bdbdbd;border-top:none;border-radius:0 0 2px 2px"></div>
<svg class="a" style="left:4.5px;top:503.5px" width="11" height="13" viewBox="0 0 11 13"><path d="M3 0.6 H7.5 L10.4 3.5 V10 H3 Z" fill="#fff" stroke="#5a6a9a" stroke-width="0.9"/><path d="M0.6 2.6 H5.2 L7.8 5.2 V12.4 H0.6 Z" fill="#fff" stroke="#7a7a7a" stroke-width="0.9"/></svg>
<div class="t" style="left:19.8px;top:503.56px;font-size:10px;line-height:14px;height:14px;color:#6e6e6e;transform:scaleX(0.7874);-webkit-text-stroke:0.3px;">POUs</div>
<svg class="a" style="left:48px;top:504px" width="13.5" height="12" viewBox="0 0 13.5 12"><path d="M1 1.5 Q6.7 -0.8 12.5 1.5 V4 Q6.7 6.5 1 4 Z" fill="#c4c4c4" stroke="#6a6a6a" stroke-width="0.8"/><ellipse cx="6.75" cy="1.7" rx="5.4" ry="1.3" fill="#e2e2e2"/><path d="M6.75 5 V8" stroke="#333" stroke-width="1"/><path d="M0.3 9.8 H13.2" stroke="#222" stroke-width="1.6"/><circle cx="6.75" cy="9.4" r="2.2" fill="#f0d020" stroke="#7a6a08" stroke-width="0.6"/></svg>
<div class="t" style="left:64.8px;top:503.56px;font-size:10px;line-height:14px;height:14px;color:#1a1a2a;transform:scaleX(0.8294);-webkit-text-stroke:0.3px;">Devices</div>
<div class="t" style="left:5.3px;top:527.23px;font-size:9.2px;line-height:13.2px;height:13.2px;color:#111;transform:scaleX(0.9875);-webkit-text-stroke:0.3px;">Messages - Total 0 error(s), 0 warning(s), 2 message(s)</div>
<svg class="a" style="left:896.8px;top:531.7px" width="7" height="4.4" viewBox="0 0 7 4.4"><path d="M0 0 H7 L3.5 4.2 Z" fill="#111"/></svg>
<svg class="a" style="left:914.5px;top:529.0px" width="6" height="9" viewBox="0 0 6 9"><path d="M1.4 0.5 H4.6 V4.6 H1.4 Z" fill="none" stroke="#111" stroke-width="0.9"/><path d="M4 0.5 V4.6" stroke="#111" stroke-width="1.1"/><path d="M0.3 4.9 H5.7 M3 4.9 V8.2" stroke="#111" stroke-width="0.9"/></svg>
<svg class="a" style="left:929.9px;top:529.8px" width="7.4" height="7.4" viewBox="0 0 7.4 7.4"><path d="M0.8 0.8 L6.6 6.6 M6.6 0.8 L0.8 6.6" stroke="#111" stroke-width="1.7"/></svg>
<div class="a" style="left:1px;top:543px;width:228px;height:20px;background:#fefefe;"></div>
<div class="t" style="left:5px;top:546.55px;font-size:10px;line-height:14px;height:14px;color:#111;transform:scaleX(0.9963);-webkit-text-stroke:0.3px;">Project synchronization</div>
<div class="a" style="left:1px;top:563px;width:943px;height:1px;background:#7d7d88;"></div>
<div class="t" style="left:8px;top:568.55px;font-size:10px;line-height:14px;height:14px;color:#222;transform:scaleX(0.9796);-webkit-text-stroke:0.3px;">Description</div>
<div class="t" style="left:760.4px;top:568.55px;font-size:10px;line-height:14px;height:14px;color:#222;transform:scaleX(0.9896);-webkit-text-stroke:0.3px;">Project</div>
<div class="t" style="left:810.6px;top:568.55px;font-size:10px;line-height:14px;height:14px;color:#222;transform:scaleX(0.9965);-webkit-text-stroke:0.3px;">Object</div>
<div class="t" style="left:860px;top:568.55px;font-size:10px;line-height:14px;height:14px;color:#222;-webkit-text-stroke:0.3px;">Position</div>
<div class="a" style="left:1px;top:601px;width:905px;height:16px;background:#f0f0f0;"></div>
<div class="a" style="left:729px;top:564px;width:1px;height:53px;background:#e6e6e6;"></div>
<div class="a" style="left:755px;top:564px;width:1px;height:53px;background:#e6e6e6;"></div>
<div class="a" style="left:805px;top:564px;width:1px;height:53px;background:#e6e6e6;"></div>
<div class="a" style="left:855px;top:564px;width:1px;height:53px;background:#e6e6e6;"></div>
<div class="a" style="left:905px;top:564px;width:1px;height:53px;background:#e6e6e6;"></div>
<div class="t" style="left:22.8px;top:588.23px;font-size:9.2px;line-height:13.2px;height:13.2px;color:#222;transform:scaleX(0.9633);-webkit-text-stroke:0.3px;">Synchronizing the project...</div>
<svg class="a" style="left:8px;top:588.1px" width="9" height="9" viewBox="0 0 9 9"><circle cx="4.5" cy="4.5" r="4.5" fill="#1428d2"/><rect x="3.8" y="1.6" width="1.6" height="1.5" fill="#fff"/><rect x="3.8" y="3.8" width="1.6" height="3.6" fill="#fff"/></svg>
<div class="t" style="left:22.8px;top:604.23px;font-size:9.2px;line-height:13.2px;height:13.2px;color:#222;transform:scaleX(0.9633);-webkit-text-stroke:0.3px;">Synchronizing the project...</div>
<svg class="a" style="left:8px;top:604.1px" width="9" height="9" viewBox="0 0 9 9"><circle cx="4.5" cy="4.5" r="4.5" fill="#1428d2"/><rect x="3.8" y="1.6" width="1.6" height="1.5" fill="#fff"/><rect x="3.8" y="3.8" width="1.6" height="3.6" fill="#fff"/></svg>
<div class="a" style="left:230px;top:544px;width:105.39999999999998px;height:18px;background:#dfe9f6;border:1px solid #3c7bd0"></div>
<div class="a" style="left:334.2px;top:544px;width:78.19999999999999px;height:18px;background:#dfe9f6;border:1px solid #3c7bd0"></div>
<div class="a" style="left:411px;top:544px;width:79.19999999999999px;height:18px;background:#dfe9f6;border:1px solid #3c7bd0"></div>
<div class="t" style="left:292.5px;top:545.55px;font-size:10px;line-height:14px;height:14px;color:#222;transform:scaleX(0.8950);-webkit-text-stroke:0.3px;">0 error(s)</div>
<div class="t" style="left:352.7px;top:545.55px;font-size:10px;line-height:14px;height:14px;color:#222;transform:scaleX(0.9687);-webkit-text-stroke:0.3px;">0 warning(s)</div>
<div class="t" style="left:428.6px;top:545.55px;font-size:10px;line-height:14px;height:14px;color:#222;transform:scaleX(0.9310);-webkit-text-stroke:0.3px;">2 message(s)</div>
<svg class="a" style="left:338px;top:548px" width="9" height="9" viewBox="0 0 9 9"><circle cx="4.5" cy="4.5" r="4.2" fill="#f3e21a" stroke="#8a8200" stroke-width="0.8"/><rect x="3.9" y="1.8" width="1.2" height="3.4" fill="#222"/><rect x="3.9" y="6" width="1.2" height="1.2" fill="#222"/></svg>
<svg class="a" style="left:414.5px;top:548px" width="9" height="9" viewBox="0 0 9 9"><circle cx="4.5" cy="4.5" r="4.5" fill="#1428d2"/><rect x="3.8" y="1.6" width="1.6" height="1.5" fill="#fff"/><rect x="3.8" y="3.8" width="1.6" height="3.6" fill="#fff"/></svg>
<svg class="a" style="left:499px;top:548px" width="10" height="10" viewBox="0 0 10 10"><path d="M1 1 L9 9 M9 1 L1 9" stroke="#333" stroke-width="1.2"/></svg>
<svg class="a" style="left:518px;top:548px" width="11" height="10" viewBox="0 0 11 10"><path d="M1.5 1 L9.5 9 M9.5 1 L1.5 9" stroke="#222" stroke-width="1.3"/><path d="M0 3.5 H7 M0 5.5 H6" stroke="#222" stroke-width="0.9"/></svg>
<div class="a" style="left:1px;top:645px;width:943px;height:1px;background:#909090;"></div>
<div class="t" style="left:300px;top:649.40px;font-size:9px;line-height:13px;height:13px;color:#222;transform:scaleX(1.0179);-webkit-text-stroke:0.3px;">evice user: boschrexroth</div>
<div class="t" style="left:456.8px;top:649.40px;font-size:9px;line-height:13px;height:13px;color:#222;transform:scaleX(0.9749);-webkit-text-stroke:0.3px;">Last build:</div>
<div class="t" style="left:564.6px;top:649.40px;font-size:9px;line-height:13px;height:13px;color:#222;transform:scaleX(0.9196);-webkit-text-stroke:0.3px;">Precompile</div>
<div class="t" style="left:703px;top:649.40px;font-size:9px;line-height:13px;height:13px;color:#222;transform:scaleX(1.0210);-webkit-text-stroke:0.3px;">Project user: (nobody)</div>
<div class="t" style="left:515px;top:649.40px;font-size:9px;line-height:13px;height:13px;color:#222;-webkit-text-stroke:0.3px;">0</div>
<div class="t" style="left:540px;top:649.40px;font-size:9px;line-height:13px;height:13px;color:#222;-webkit-text-stroke:0.3px;">0</div>
<div class="a" style="left:429px;top:648px;width:1px;height:15px;background:#d4d4d4;"></div>
<div class="a" style="left:646px;top:648px;width:1px;height:15px;background:#d4d4d4;"></div>
<div class="a" style="left:845px;top:648px;width:1px;height:15px;background:#d4d4d4;"></div>
<svg class="a" style="left:503.3px;top:651.5px" width="8" height="8" viewBox="0 0 8 8"><circle cx="4" cy="4" r="4" fill="#d81e1e"/><path d="M2.3 2.3 L5.7 5.7 M5.7 2.3 L2.3 5.7" stroke="#fff" stroke-width="1.2"/></svg>
<svg class="a" style="left:526.5px;top:651.5px" width="8" height="8" viewBox="0 0 8 8"><circle cx="4" cy="4" r="3.7" fill="#f3e21a" stroke="#8a8200" stroke-width="0.7"/><rect x="3.5" y="1.6" width="1" height="3" fill="#222"/><rect x="3.5" y="5.4" width="1" height="1" fill="#222"/></svg>
<svg class="a" style="left:610px;top:650px" width="13" height="11" viewBox="0 0 13 11"><path d="M1 6 L4.5 10 L12 1.5" stroke="#2f9e2f" stroke-width="1.8" fill="none"/></svg>
<svg class="a" style="left:850.5px;top:648.3px" width="10.5" height="13.5" viewBox="0 0 10.5 13.5"><path d="M5.25 0.4 L10 2 Q10.2 9 5.25 13 Q0.3 9 0.5 2 Z" fill="#b9b6a4" stroke="#77746a" stroke-width="0.8"/><path d="M5.25 2 L8.6 3.1 Q8.6 8.4 5.25 11.2 Q1.9 8.4 1.9 3.1 Z" fill="#e9db4e"/><path d="M5.25 2 V11.2 M1.9 6.2 H8.6" stroke="#c9bd5a" stroke-width="0.7"/><path d="M5.25 2 L8.6 3.1 V6.2 H5.25 Z" fill="#c8c6b0" opacity="0.7"/></svg>
<svg class="a" style="left:869px;top:647.5px" width="41.5" height="13.5" viewBox="0 0 41.5 13.5"><path d="M1.2 1.3 H4.5 M1 1.3 L2.6 0.3 M1 1.3 L2.6 2.3" stroke="#d01c2c" stroke-width="0.9" fill="none"/><rect x="0.6" y="3.4" width="11.6" height="7.6" rx="0.8" fill="#c3c3c3" stroke="#808080" stroke-width="0.7"/><rect x="1.6" y="6.4" width="4.6" height="2.4" fill="#a01830"/><rect x="1.6" y="9.3" width="4.6" height="1.2" fill="#8a2030"/><path d="M7.5 4.5 V10 M9.3 4.5 V10" stroke="#8c8c8c" stroke-width="0.8"/><path d="M12.2 5.2 L14.6 6 V8.6 L12.2 9.6 Z" fill="#5a5a5a"/><path d="M15.5 7.4 H26" stroke="#111" stroke-width="1"/><path d="M15.2 7.4 L17.8 5.8 V9 Z" fill="#111"/><rect x="31" y="1.6" width="10" height="8.6" fill="#c4ccd6" stroke="#8a94a2" stroke-width="0.7"/><rect x="33" y="3" width="7" height="5.6" fill="#e4e8ee"/><circle cx="38.6" cy="6.6" r="1.3" fill="#3ab04a"/><rect x="25.8" y="4.4" width="10.4" height="6.6" fill="#2c98e2" stroke="#1c5a9a" stroke-width="0.8"/><path d="M27.4 6.4 H32.5" stroke="#9ad4fa" stroke-width="1"/><path d="M28 12.6 H34.5 M31.2 11 V12.6" stroke="#3a6a9a" stroke-width="1.1"/></svg>
<svg class="a" style="left:913.2px;top:649.2px" width="12.5" height="11.5" viewBox="0 0 12.5 11.5"><path d="M2 4.6 Q3.4 1.2 6.8 1.3 Q9.6 1.6 10.6 4" fill="none" stroke="#0a0a0a" stroke-width="2"/><path d="M10.6 7 Q9.2 10.3 5.8 10.2 Q3 9.9 2 7.5" fill="none" stroke="#0a0a0a" stroke-width="2"/><path d="M8.2 4.8 H12.4 V0.8 Z" fill="#0a0a0a"/><path d="M4.4 6.8 H0.2 V10.8 Z" fill="#0a0a0a"/><path d="M3.4 5.8 H9.2" stroke="#0a0a0a" stroke-width="1.4"/></svg>
<div class="a" style="left:941px;top:657px;width:1px;height:1px;background:#c0c0c0;"></div>
<div class="a" style="left:939px;top:659px;width:1px;height:1px;background:#c0c0c0;"></div>
<div class="a" style="left:941px;top:659px;width:1px;height:1px;background:#c0c0c0;"></div>
<div class="a" style="left:937px;top:661px;width:1px;height:1px;background:#c0c0c0;"></div>
<div class="a" style="left:939px;top:661px;width:1px;height:1px;background:#c0c0c0;"></div>
<div class="a" style="left:941px;top:661px;width:1px;height:1px;background:#c0c0c0;"></div>
<div class="a" style="left:845px;top:12px;width:9px;height:1px;background:#222;"></div>
<div class="a" style="left:882px;top:8px;width:9px;height:9px;background:transparent;border:1px solid #222"></div>
<svg class="a" style="left:920.5px;top:8px" width="9" height="9" viewBox="0 0 9 9"><path d="M0.3 0.3 L8.7 8.7 M8.7 0.3 L0.3 8.7" stroke="#222" stroke-width="1.2"/></svg>
<div class="a" style="left:301px;top:335px;width:1.7px;height:330px;background:linear-gradient(rgba(120,120,120,0) 0px,#7c7c7c 5px,#7c7c7c 100%);"></div>
<div class="a" style="left:110px;top:333px;width:191px;height:340px;background:#fff;border:1px solid #a6a6a6"></div>
<div class="a" style="left:111px;top:334px;width:20px;height:338px;background:linear-gradient(90deg,#f4f4f4,#eeeeee);"></div>
<div class="a" style="left:131px;top:334px;width:1px;height:338px;background:#fafafa;"></div>
<div class="a" style="left:112px;top:532px;width:187px;height:18px;background:#bcd9f3;border:1px solid #3f8fd9"></div>
<div class="t" style="left:140.6px;top:335.56px;font-size:10px;line-height:14px;height:14px;color:#111;transform:scaleX(0.9960);-webkit-text-stroke:0.35px;">Cut</div>
<div class="t" style="left:140.6px;top:355.56px;font-size:10px;line-height:14px;height:14px;color:#111;transform:scaleX(0.9895);-webkit-text-stroke:0.35px;">Copy</div>
<div class="t" style="left:140.6px;top:373.56px;font-size:10px;line-height:14px;height:14px;color:#8c8c8c;transform:scaleX(0.9033);-webkit-text-stroke:0.35px;">Paste</div>
<div class="t" style="left:140.6px;top:391.56px;font-size:10px;line-height:14px;height:14px;color:#111;transform:scaleX(0.9548);-webkit-text-stroke:0.35px;">Delete</div>
<div class="t" style="left:140.6px;top:414.56px;font-size:10px;line-height:14px;height:14px;color:#111;transform:scaleX(0.9875);-webkit-text-stroke:0.35px;">Refactoring</div>
<div class="t" style="left:140.6px;top:437.56px;font-size:10px;line-height:14px;height:14px;color:#111;transform:scaleX(0.9497);-webkit-text-stroke:0.35px;">Properties...</div>
<div class="t" style="left:140.6px;top:461.56px;font-size:10px;line-height:14px;height:14px;color:#8c8c8c;-webkit-text-stroke:0.35px;">Add Object</div>
<div class="t" style="left:140.6px;top:479.56px;font-size:10px;line-height:14px;height:14px;color:#111;transform:scaleX(0.9788);-webkit-text-stroke:0.35px;">Add Folder...</div>
<div class="t" style="left:140.6px;top:497.56px;font-size:10px;line-height:14px;height:14px;color:#111;transform:scaleX(0.9584);-webkit-text-stroke:0.35px;">Add Device...</div>
<div class="t" style="left:140.6px;top:515.55px;font-size:10px;line-height:14px;height:14px;color:#111;transform:scaleX(0.9402);-webkit-text-stroke:0.35px;">Insert Device...</div>
<div class="t" style="left:140.6px;top:533.55px;font-size:10px;line-height:14px;height:14px;color:#111;transform:scaleX(0.9378);-webkit-text-stroke:0.35px;">Scan for Devices...</div>
<div class="t" style="left:140.6px;top:552.55px;font-size:10px;line-height:14px;height:14px;color:#111;transform:scaleX(0.9461);-webkit-text-stroke:0.35px;">Disable Device</div>
<div class="t" style="left:140.6px;top:570.55px;font-size:10px;line-height:14px;height:14px;color:#111;transform:scaleX(0.9564);-webkit-text-stroke:0.35px;">Update Device...</div>
<div class="t" style="left:140.6px;top:589.55px;font-size:10px;line-height:14px;height:14px;color:#111;transform:scaleX(0.9793);-webkit-text-stroke:0.35px;">Edit Object</div>
<div class="t" style="left:140.6px;top:607.55px;font-size:10px;line-height:14px;height:14px;color:#111;transform:scaleX(0.9835);-webkit-text-stroke:0.35px;">Edit Object With...</div>
<div class="t" style="left:140.6px;top:630.55px;font-size:10px;line-height:14px;height:14px;color:#111;transform:scaleX(0.9957);-webkit-text-stroke:0.35px;">Edit IO mapping</div>
<div class="t" style="left:140.6px;top:648.55px;font-size:10px;line-height:14px;height:14px;color:#111;transform:scaleX(0.9960);-webkit-text-stroke:0.35px;">Import mappings from CSV...</div>
<div class="a" style="left:138px;top:410px;width:161px;height:1px;background:#d4d4d4;"></div>
<div class="a" style="left:138px;top:433px;width:161px;height:1px;background:#d4d4d4;"></div>
<div class="a" style="left:138px;top:456px;width:161px;height:1px;background:#d4d4d4;"></div>
<div class="a" style="left:138px;top:626px;width:161px;height:1px;background:#d4d4d4;"></div>
<svg class="a" style="left:287px;top:417px" width="5" height="9" viewBox="0 0 5 9"><path d="M0.5 1 L4.5 4.5 L0.5 8 Z" fill="#111"/></svg>
<svg class="a" style="left:116.5px;top:337px" width="9" height="12.5" viewBox="0 0 9 12.5"><path d="M2.2 0.4 L5.6 7.6 M6.8 0.4 L3.4 7.6" stroke="#2a2a3a" stroke-width="1.1"/><circle cx="2.4" cy="9.8" r="1.9" fill="none" stroke="#4a4ab8" stroke-width="1.1"/><circle cx="6.6" cy="9.8" r="1.9" fill="none" stroke="#4a4ab8" stroke-width="1.1"/></svg>
<svg class="a" style="left:114.5px;top:355px" width="13.5" height="12" viewBox="0 0 13.5 12"><path d="M0.5 0.5 H5 L7 2.5 V7.6 H0.5 Z" fill="#fff" stroke="#555" stroke-width="0.9"/><path d="M1.8 3 H4.6 M1.8 4.8 H5.4" stroke="#888" stroke-width="0.7"/><path d="M5.6 3.8 H10.4 L12.8 6.2 V11.5 H5.6 Z" fill="#fff" stroke="#3a3a9a" stroke-width="1"/><path d="M7.2 7.2 H11 M7.2 9.2 H11" stroke="#5a5ab8" stroke-width="0.8"/></svg>
<svg class="a" style="left:114.5px;top:374px" width="14" height="12.5" viewBox="0 0 14 12.5"><path d="M0.5 1.5 H10.5 V11 H0.5 Z" fill="#c2c2c2" stroke="#a6a6a6" stroke-width="0.9"/><rect x="3.2" y="0.2" width="4.6" height="2.6" fill="#acacac"/><path d="M5.5 5 H11.5 L13.5 7 V12.2 H5.5 Z" fill="#e8e8e8" stroke="#a6a6a6" stroke-width="0.9"/><path d="M7 8 H12 M7 10 H12" stroke="#b8b8b8" stroke-width="0.8"/></svg>
<svg class="a" style="left:115px;top:393px" width="12" height="11" viewBox="0 0 12 11"><path d="M0.8 0.8 L11 10 M11 0.8 L0.8 10" stroke="#1a1a1a" stroke-width="1.3"/></svg>
<svg class="a" style="left:114.8px;top:438.6px" width="13.6" height="11.8" viewBox="0 0 13.6 11.8"><path d="M0.6 1.6 H3.4 L4.4 0.5 H7.8 V2.8 H9.8 V9.8 H0.6 Z" fill="#e4e4e4" stroke="#2e2e2e" stroke-width="1"/><path d="M1.8 3.3 H8.4" stroke="#444" stroke-width="0.9"/><path d="M4.6 5.2 H13 V11.2 H4.6 Z" fill="#d6def0" stroke="#2e2e3e" stroke-width="1"/><path d="M5.9 7.3 H8 M9.2 7.3 H11.8 M5.9 9.2 H8 M9.2 9.2 H11.8" stroke="#3a4aa0" stroke-width="1.1"/></svg>
<svg class="a" style="left:115px;top:461.5px" width="13.5" height="12.5" viewBox="0 0 13.5 12.5"><path d="M0.6 3.5 H12.8 V12 H0.6 Z" fill="#dcdcdc" stroke="#c0c0c0" stroke-width="0.8"/><path d="M2.2 6 H4.4 V8 H2.2 Z M5.8 6 H8 V8 H5.8 Z M9.4 6 H11.6 V8 H9.4 Z M2.2 9.3 H4.4 V11 H2.2 Z M5.8 9.3 H8 V11 H5.8 Z M9.4 9.3 H11.6 V11 H9.4 Z" fill="#c4c4c4"/><path d="M1 0.5 H4 L5.5 3.4 H1 Z" fill="#c8c8c8"/></svg>
<svg class="a" style="left:114.5px;top:480px" width="14" height="11" viewBox="0 0 14 11"><path d="M0.6 2 Q0.6 0.6 2 0.6 H5 L6.5 2.2 H12.4 Q13.4 2.2 13.4 3.4 V9.4 Q13.4 10.4 12.4 10.4 H1.6 Q0.6 10.4 0.6 9.4 Z" fill="#ecb630" stroke="#b98a1e" stroke-width="0.9"/><path d="M2.4 4.6 H13.2 L12.4 9.8 H1.2 Z" fill="#f9dc6a"/><path d="M1 10.1 H13" stroke="#b98a1e" stroke-width="0.9"/></svg>
<svg class="a" style="left:115.5px;top:589.5px" width="12.5" height="13" viewBox="0 0 12.5 13"><path d="M0.6 3.6 H6.6 L8.8 5.8 V12.4 H0.6 Z" fill="#fff" stroke="#4a4a4a" stroke-width="1"/><path d="M0.6 12.5 H8.9 M8.9 6 V12.5" stroke="#2a2a2a" stroke-width="1.1"/><path d="M7.5 2.6 Q9.5 0.6 11.5 1.6" fill="none" stroke="#555" stroke-width="0.8"/><path d="M10.3 0.3 L12.4 1.2 L11.2 3.2 Z" fill="#333"/></svg>
<div class="a" style="left:7.3px;top:6px;width:14.2px;height:8px;background:#0b2948;border-radius:0.5px"></div>
<div class="t" style="left:9.5px;top:5.28px;font-size:5.6px;line-height:9.6px;height:9.6px;color:#fff;font-weight:bold;transform:scaleX(0.8750);-webkit-text-stroke:0;">PLC</div>
<div class="a" style="left:11px;top:15.2px;width:6px;height:1.2px;background:#8a96a8;"></div>
<div class="a" style="left:0px;top:0px;width:945px;height:1px;background:#2a4258;"></div>
<div class="a" style="left:0px;top:0px;width:1.25px;height:665px;background:#1b3b46;"></div>
<div class="a" style="left:943.6px;top:0px;width:1.4px;height:665px;background:#1e4166;"></div>
<div class="a" style="left:0px;top:663.6px;width:945px;height:1.4px;background:#1e4166;"></div>
</div></div>
</body></html>
